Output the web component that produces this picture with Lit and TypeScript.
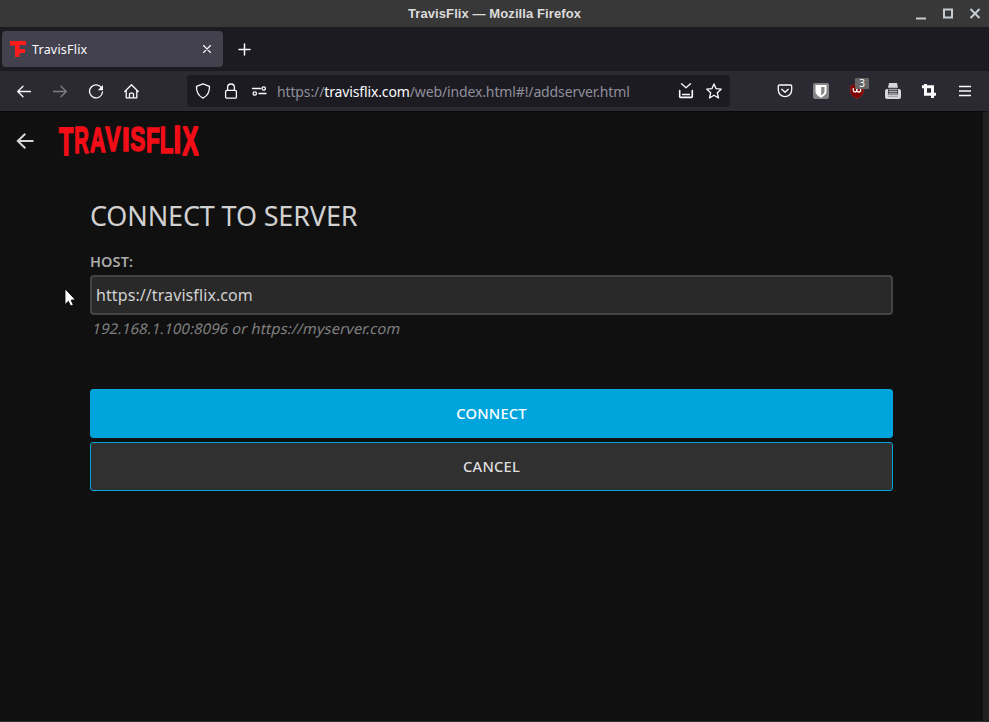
import { LitElement, html, css, svg } from "lit";
import { customElement } from "lit/decorators.js";

// letter, left, width, cap height, ink start (em), ink width (em)
const LOGO: [string, number, number, number, number, number][] = [
  ["T", 0, 14.3, 29, 0.021, 0.569],
  ["R", 16.2, 13.8, 27.5, 0.067, 0.64],
  ["A", 30.8, 16, 26, 0.01, 0.7],
  ["V", 46, 16, 25.3, 0.01, 0.65],
  ["I", 64.1, 5.2, 25, 0.067, 0.144],
  ["S", 71.6, 14.2, 25.5, 0.04, 0.58],
  ["F", 88, 12.5, 26, 0.067, 0.51],
  ["L", 101.8, 12.5, 27, 0.067, 0.52],
  ["I", 115.6, 5.2, 27.8, 0.067, 0.144],
  ["X", 123, 16.8, 29.5, 0.01, 0.645],
];
const EM = 40;
const OUTLINE = 1.8;

@customElement("app-root")
export class AppRoot extends LitElement {
  static styles = css`
    :host { display: flex; flex-direction: column; width: 989px; height: 722px; background: #101010; overflow: hidden; position: relative; font-family: "Noto Sans", sans-serif; }
    * { box-sizing: border-box; }
    svg { display: block; fill: none; stroke: #fbfbfe; stroke-width: 1.3; stroke-linecap: round; stroke-linejoin: round; flex: none; }
    .title { height: 27px; background: #383838; display: grid; grid-template-columns: 1fr auto 1fr; align-items: center; font: bold 13px/27px "Liberation Sans", sans-serif; color: #dcdcdc; flex: none; }
    .wname { grid-column: 2; white-space: nowrap; letter-spacing: 0.09px; }
    .wctl { display: flex; gap: 11px; justify-content: flex-end; padding-right: 6px; }
    .wctl svg { stroke: #c5cdd2; stroke-width: 2; stroke-linecap: butt; stroke-linejoin: miter; }
    .tabs { height: 44px; background: #1c1b22; display: flex; align-items: center; padding: 0 2px; flex: none; }
    .tab { width: 221px; height: 36px; border-radius: 4px; background: #42414d; display: flex; align-items: center; padding: 0 8px; color: #fbfbfe; font-size: 12.5px; }
    .tab .lbl { flex: 1; margin-left: 6px; letter-spacing: 0.2px; }
    .plus { margin-left: 14px; }
    .nav { height: 40px; background: #2b2a33; display: flex; align-items: center; flex: none; padding-left: 16px; }
    .left { display: flex; gap: 20px; width: 171px; }
    .url { width: 543px; height: 32px; border-radius: 4px; background: #1c1b22; display: flex; align-items: center; padding: 0 8px; gap: 12px; }
    .addr { font-size: 14px; color: #8f8f9a; flex: 1; white-space: nowrap; margin-left: -2px; letter-spacing: -0.13px; }
    .addr b { font-weight: 400; color: #fbfbfe; }
    .right { display: flex; gap: 20px; margin-left: 47px; }
    .dim { opacity: .4; }
    .page { flex: 1; display: flex; flex-direction: column; border-bottom: 1px solid #303030; border-top: 1px solid #080808; border-right: 6px solid #202020; }
    .head { height: 59px; display: flex; align-items: center; padding-left: 16px; }
    .logo { margin-left: 24px; fill: #f20d17; stroke: #f20d17; stroke-linejoin: miter; font: bold 40px "Liberation Sans", sans-serif; }
    .letter { stroke-width: 1.8; stroke-miterlimit: 2; }
    .form { margin: 0 90px; display: flex; flex-direction: column; color: #d1d1d1; }
    h1 { font-size: 27px; font-weight: 400; line-height: 38px; margin: 26px 0 0; letter-spacing: -0.15px; }
    label { font-size: 14.5px; font-weight: 600; line-height: 20px; margin-top: 16px; color: #aaa; letter-spacing: 0.1px; }
    .input { height: 40px; margin-top: 4px; background: #292929; border: 2px solid #444; border-radius: 4px; padding-left: 4px; font-size: 16px; line-height: 36px; letter-spacing: 0.09px; }
    .hint { font-size: 14.7px; color: #818181; line-height: 20px; margin: 3px 0 0 3px; transform: skewX(-13deg); width: max-content; letter-spacing: 0.13px; }
    .btn { height: 49px; border-radius: 3px; border: 1px solid #00a4dc; display: flex; align-items: center; justify-content: center; padding-bottom: 2px; font-size: 14.7px; font-weight: 500; letter-spacing: 0.2px; }
    .go { background: #00a4dc; margin-top: 51px; color: #fff; }
    .no { background: #303030; margin-top: 4px; color: #dfdfdf; }
    .cursor { position: absolute; left: 63px; top: 288px; }
    .shieldwrap { position: relative; }
    .badge { position: absolute; left: 6px; top: -5px; width: 14px; height: 11px; border-radius: 1px; background: #666; color: #fff; font-size: 10px; line-height: 11px; text-align: center; }
  `;

  private icon(body: unknown, cls = "", w = 16, h = 16) {
    return html`<svg class=${cls} width=${w} height=${h} viewBox="0 0 ${w} ${h}">${body}</svg>`;
  }

  private logo() {
    return html`<svg class="logo" width="144" height="58" viewBox="-1 0 144 58">
      ${LOGO.map(([c, x, w, h, ink, inkW]) => {
        const sx = w / (inkW * EM + OUTLINE);
        const sy = h / (0.688 * EM + OUTLINE);
        const tx = x - (ink * EM - OUTLINE / 2) * sx;
        const ty = 13.5 + h - (OUTLINE / 2) * sy;
        return svg`<text class="letter" transform="translate(${tx} ${ty}) scale(${sx} ${sy})">${c}</text>`;
      })}
    </svg>`;
  }

  render() {
    return html`
      <div class="title">
        <span class="wname">TravisFlix — Mozilla Firefox</span>
        <div class="wctl">
          ${this.icon(svg`<path d="M3 12.500h10"/>`)}
          ${this.icon(svg`<path d="M4 3.500h8v8H4z"/>`)}
          ${this.icon(svg`<path d="M3.500 3l9 9M12.500 3l-9 9"/>`)}
        </div>
      </div>
      <div class="tabs">
        <div class="tab">
          ${this.icon(svg`<path fill="#ff1b1b" stroke="none" d="M0 0h16v4H9.500V8H15v4H9.500v4H5V4.500H0z"/>`)}
          <span class="lbl">TravisFlix</span>
          ${this.icon(svg`<path stroke-width="1.1" d="M4.500 4.500l7 7M11.500 4.500l-7 7"/>`)}
        </div>
        ${this.icon(svg`<path stroke-width="1.500" d="M7.500 3v11M2 8.500h11"/>`, "plus")}
      </div>
      <div class="nav">
        <div class="left">
          ${this.icon(svg`<path d="M14.500 8.500H1.700M7 3.300L1.700 8.500L7 13.800"/>`)}
          ${this.icon(svg`<path d="M1.500 8.500h12.800M9 3.300L14.300 8.500L9 13.800"/>`, "dim")}
          ${this.icon(svg`<path d="M13.500 4.900A6.500 6.500 0 1 0 14.500 9"/><path fill="#fbfbfe" stroke="none" d="M15 2v5.200H9.800z"/>`)}
          ${this.icon(svg`<path d="M.8 8.500L7.500 1.800 14.200 8.500M2.200 7.500v7.300h10.600V7.500M5.500 14.700v-3.600q0-1 1-1h2q1 0 1 1v3.600"/>`)}
        </div>
        <div class="url">
          ${this.icon(svg`<path d="M8 .9L1.500 3.400C1.300 8.500 3 12.600 8 15.200c5-2.600 6.700-6.700 6.500-11.800z"/>`)}
          ${this.icon(svg`<rect x="2.600" y="7.300" width="10.800" height="7.900" rx="1.300"/><path d="M4.600 7.300V4.400a3.400 3.400 0 0 1 6.800 0v2.900"/>`)}
          ${this.icon(svg`<path d="M1.500 5.500h8M8 10.500h7"/><circle cx="12.700" cy="5.500" r="1.700"/><circle cx="3.800" cy="10.500" r="1.700"/>`)}
          <span class="addr">https://<b>travisflix.com</b>/web/index.html#!/addserver.html</span>
          ${this.icon(svg`<path stroke-width="1.600" d="M1.700 7.500v6.100q0 .8.800.8h11q.8 0 .8-.8V7.500"/><path d="M4.500 11.500h7M3.500 .8L8 4.800l4.500-4"/>`)}
          ${this.icon(svg`<path d="M8 .9l2.100 4.800 5.100.5-3.900 3.500 1.200 5.300L8 12.200 3.500 15l1.200-5.300L.8 6.200l5.100-.5z"/>`)}
        </div>
        <div class="right">
          ${this.icon(svg`<path d="M2.500 2h11q1.200 0 1.200 1.200V7a6.700 6.700 0 0 1-13.400 0V3.200Q1.300 2 2.500 2z"/><path d="M4.800 6.200L8 9.200l3.200-3"/>`)}
          ${this.icon(svg`<rect width="16" height="16" rx="2" fill="#858585" stroke="none"/><path fill="#fff" stroke="none" d="M2.500 2h11v6.500Q13.500 12 8 14.800 2.500 12 2.500 8.500z"/><path fill="#858585" stroke="none" d="M8.200 4h3.300v4.500q0 2-3.300 3.900z"/>`)}
          <div class="shieldwrap">
            ${this.icon(svg`<path fill="#800000" stroke="#a53a3a" stroke-width=".5" d="M8 .5L1.300 3v5c0 3.500 3.500 6 6.700 7.800C11.200 14 14.700 11.500 14.700 8V3z"/><path stroke-width="1.300" d="M4.300 5.500v1.800q0 1.700 1.700 1.700t1.700-1.700V5.500"/><circle cx="9.700" cy="7" r="2" stroke-width="1.300"/>`)}
            <span class="badge">3</span>
          </div>
          ${this.icon(svg`<path fill="#d7d7db" stroke="none" d="M4 0h8l1 4.700H3zM1.500 6H3v5.500h10V6h1.500q1.500.5 1.500 2v6q0 2-2 2H2q-2 0-2-2V8q0-1.500 1.500-2z"/><path fill="#55555e" stroke="none" d="M3.600 6h8.800v5H3.600z"/><path stroke="#b0b0b6" stroke-width="1" d="M4 6.300h8M4 8.500h8M4 10.700h8"/><path stroke="#9b9ba2" stroke-width="1" d="M3.500 13.300h9"/>`)}
          ${this.icon(svg`<path stroke-width="3" stroke-linecap="butt" stroke-linejoin="miter" d="M4.500 1v10.300h10.500M1 3.700h10.500V15"/>`)}
          ${this.icon(svg`<path stroke-linecap="butt" d="M2 3.500h12M2 8h12M2 12.500h12"/>`)}
        </div>
      </div>
      <div class="page">
        <div class="head">
          ${this.icon(svg`<path stroke="#d6d6d6" stroke-width="2" stroke-linecap="butt" stroke-linejoin="miter" d="M17.500 8H2.500M9.300 .7L1.800 8l7.500 7.300"/>`, "", 18, 18)}
          ${this.logo()}
        </div>
        <div class="form">
          <h1>CONNECT TO SERVER</h1>
          <label>HOST:</label>
          <div class="input">https://travisflix.com</div>
          <div class="hint">192.168.1.100:8096 or https://myserver.com</div>
          <div class="btn go">CONNECT</div>
          <div class="btn no">CANCEL</div>
        </div>
      </div>
      ${this.icon(svg`<path fill="#fff" stroke="#000" stroke-width=".8" d="M2 1v15.500l3.400-3.200 2.200 4.700 2.700-1.200-2.200-4.600 4-.5z"/>`, "cursor", 14, 20)}
    `;
  }
}
